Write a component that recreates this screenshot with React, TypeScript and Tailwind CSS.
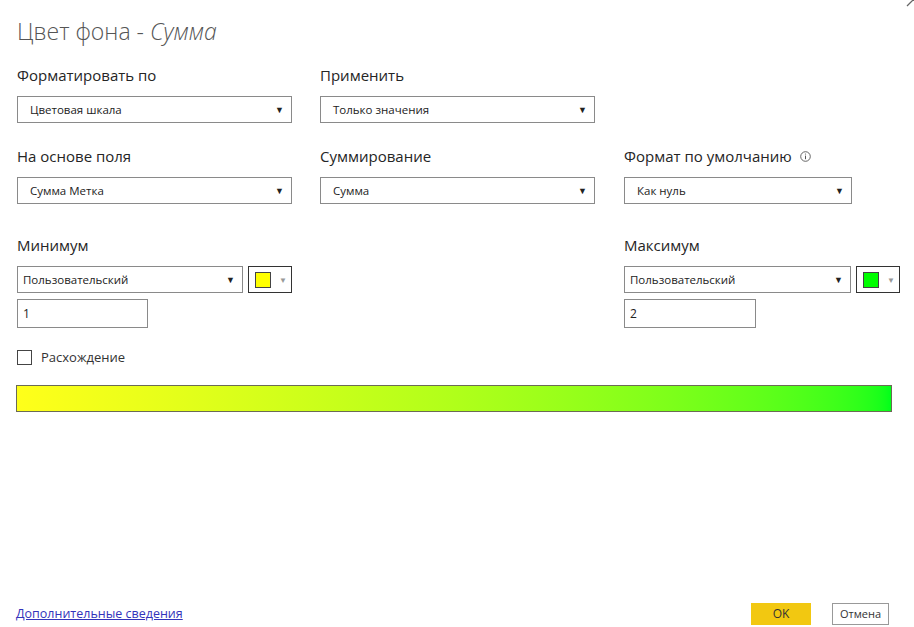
const font = { fontFamily: '"Segoe UI", "Open Sans", "Noto Sans", sans-serif' };

function Select({ value, className = 'pl-[12px]' }: { value: string; className?: string }) {
  return (
    <div className={`h-[27px] border border-[#8a8a8a] bg-white flex items-center justify-between pr-[7px] ${className}`}>
      <span className="text-[11.5px] text-[#222]">{value}</span>
      <span className="text-[9px] text-[#222] leading-none">▼</span>
    </div>
  );
}

function Swatch({ color }: { color: string }) {
  return (
    <div className="h-[27px] w-[44px] border border-[#333] bg-white flex items-center pl-[6px] gap-[8px]">
      <div className={`w-[16px] h-[16px] border border-[#444] ${color}`}></div>
      <span className="text-[8px] text-[#999] leading-none">▼</span>
    </div>
  );
}

function Label({ children }: { children: React.ReactNode }) {
  return <div className="text-[15px] text-[#252525] h-[21px] leading-[21px] mb-[10px]">{children}</div>;
}

export default function App() {
  return (
    <div style={font} className="w-[914px] h-[627px] bg-white relative overflow-hidden flex flex-col">
      {/* close button, cut off at the top */}
      <svg className="absolute right-[-7px] top-[-8px]" width="15" height="15" viewBox="0 0 15 15">
        <path d="M1 1 L14 14 M14 1 L1 14" stroke="#666" strokeWidth="1.3" />
      </svg>

      <div className="px-[17px] pt-[15px]">
        <h1 className="text-[23px] font-light text-[#555] leading-[32px]">
          Цвет фона - <span className="italic">Сумма</span>
        </h1>

        <div className="grid grid-cols-[275px_275px_auto] gap-x-[28px] mt-[18px]">
          <div>
            <Label>Форматировать по</Label>
            <Select value="Цветовая шкала" />
          </div>
          <div>
            <Label>Применить</Label>
            <Select value="Только значения" />
          </div>
          <div></div>

          <div className="mt-[23px]">
            <Label>На основе поля</Label>
            <Select value="Сумма Метка" />
          </div>
          <div className="mt-[23px]">
            <Label>Суммирование</Label>
            <Select value="Сумма" />
          </div>
          <div className="mt-[23px] pl-[1px]">
            <Label>
              <span className="flex items-center gap-[8px]">
                Формат по умолчанию
                <svg width="11" height="11" viewBox="0 0 11 11">
                  <circle cx="5.5" cy="5.5" r="4.8" fill="none" stroke="#555" strokeWidth="0.9" />
                  <line x1="5.5" y1="4.6" x2="5.5" y2="8.2" stroke="#555" strokeWidth="1" />
                  <circle cx="5.5" cy="3" r="0.6" fill="#555" />
                </svg>
              </span>
            </Label>
            <Select value="Как нуль" className="w-[228px] pl-[12px]" />
          </div>

          <div className="mt-[31px]">
            <Label>Минимум</Label>
            <div className="flex gap-[5px]">
              <Select value="Пользовательский" className="w-[226px] pl-[5px]" />
              <Swatch color="bg-[#ffff00]" />
            </div>
            <div className="mt-[6px] w-[131px] h-[29px] border border-[#8a8a8a] flex items-center pl-[5px] text-[12px] text-[#222]">1</div>
          </div>
          <div></div>
          <div className="mt-[31px] pl-[1px]">
            <Label>Максимум</Label>
            <div className="flex gap-[5px]">
              <Select value="Пользовательский" className="w-[227px] pl-[5px]" />
              <Swatch color="bg-[#00ff00]" />
            </div>
            <div className="mt-[6px] w-[132px] h-[29px] border border-[#8a8a8a] flex items-center pl-[5px] text-[12px] text-[#222]">2</div>
          </div>
        </div>

        <label className="flex items-center gap-[9px] mt-[20px]">
          <span className="w-[15px] h-[15px] border border-[#444] bg-white"></span>
          <span className="text-[13px] text-[#333]">Расхождение</span>
        </label>

        <div className="mt-[17px] ml-[-1px] w-[876px] h-[27px] border border-[#6b6b55] bg-gradient-to-r from-[#ffff1a] to-[#00ff1a]"></div>
      </div>

      <div className="mt-auto flex items-center justify-between px-[16px] pb-[2px]">
        <a href="#" className="text-[12.5px] text-[#3333bb] underline">Дополнительные сведения</a>
        <div className="flex gap-[21px] pr-[9px]">
          <button className="w-[60px] h-[22px] bg-[#f2c811] text-[12px] text-[#333]">OK</button>
          <button className="w-[57px] h-[22px] border border-[#999] bg-white text-[11px] text-[#333]">Отмена</button>
        </div>
      </div>
    </div>
  );
}
